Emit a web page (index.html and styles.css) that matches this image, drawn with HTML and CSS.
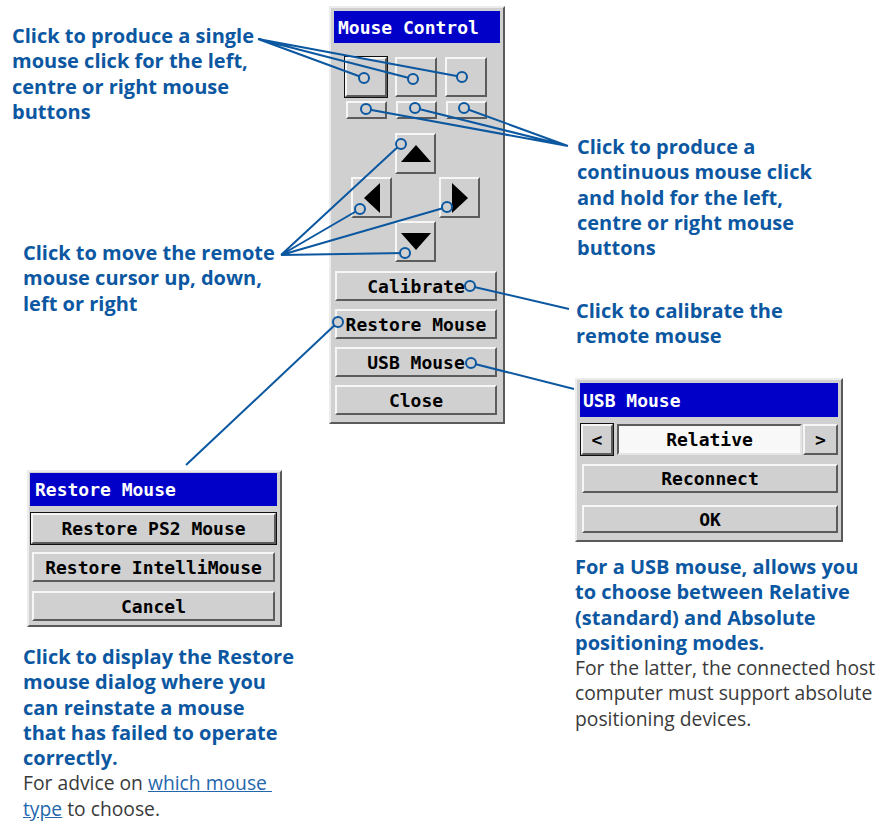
FILE: index.html
```html
<!DOCTYPE html>
<html lang="en">
<head>
    <meta charset="UTF-8">
    <meta name="viewport" content="width=device-width, initial-scale=1.0">
    <title>Mouse Control</title>
    <link rel="stylesheet" href="styles.css">
</head>
<body>
    <div class="figure">
        <!-- Mouse Control dialog -->
        <div class="dialog mouse-control">
            <div class="title">Mouse Control</div>
            <div class="click-row">
                <div class="btn focus"></div>
                <div class="btn"></div>
                <div class="btn"></div>
            </div>
            <div class="hold-row">
                <div class="btn"></div>
                <div class="btn"></div>
                <div class="btn"></div>
            </div>
            <div class="arrows">
                <div class="btn up"><svg width="30" height="17" viewBox="0 0 30 17"><polygon points="15,0 30,17 0,17"/></svg></div>
                <div class="btn left"><svg width="16" height="30" viewBox="0 0 16 30"><polygon points="0,15 16,0 16,30"/></svg></div>
                <div class="btn right"><svg width="16" height="30" viewBox="0 0 16 30"><polygon points="16,15 0,0 0,30"/></svg></div>
                <div class="btn down"><svg width="30" height="17" viewBox="0 0 30 17"><polygon points="15,17 30,0 0,0"/></svg></div>
            </div>
            <div class="actions">
                <div class="btn">Calibrate</div>
                <div class="btn">Restore Mouse</div>
                <div class="btn">USB Mouse</div>
                <div class="btn">Close</div>
            </div>
        </div>

        <!-- USB Mouse dialog -->
        <div class="dialog usb-mouse">
            <div class="title">USB Mouse</div>
            <div class="mode-row">
                <div class="btn step focus">&lt;</div>
                <div class="field">Relative</div>
                <div class="btn step next">&gt;</div>
            </div>
            <div class="btn wide reconnect">Reconnect</div>
            <div class="btn wide ok">OK</div>
        </div>

        <!-- Restore Mouse dialog -->
        <div class="dialog restore-mouse">
            <div class="title">Restore Mouse</div>
            <div class="btn ps2 focus">Restore PS2 Mouse</div>
            <div class="btn item">Restore IntelliMouse</div>
            <div class="btn item">Cancel</div>
        </div>

        <p class="note note-single">Click to produce a single<br>mouse click for the left,<br>centre or right mouse<br>buttons</p>
        <p class="note note-hold">Click to produce a<br>continuous mouse click<br>and hold for the left,<br>centre or right mouse<br>buttons</p>
        <p class="note note-move">Click to move the remote<br>mouse cursor up, down,<br>left or right</p>
        <p class="note note-calibrate">Click to calibrate the<br>remote mouse</p>
        <p class="note note-restore">Click to display the Restore<br>mouse dialog where you<br>can reinstate a mouse<br>that has failed to operate<br>correctly.<br><span class="plain">For advice on <a href="#">which mouse&nbsp;<br>type</a> to choose.</span></p>
        <p class="note note-usb">For a USB mouse, allows you<br>to choose between Relative<br>(standard) and Absolute<br>positioning modes.<br><span class="plain">For the latter, the connected host<br>computer must support absolute<br>positioning devices.</span></p>

        <!-- leader lines -->
        <svg class="leaders" width="879" height="822" viewBox="0 0 879 822">
            <g class="lines">
                <path d="M258 39 L364 78 M258 39 L413 79 M258 39 L462 77"/>
                <path d="M568 146 L366 109 M568 146 L415 108 M568 146 L464 108"/>
                <path d="M281 255 L401 144 M281 255 L360 209 M281 255 L447 207 M281 255 L405 253"/>
                <path d="M470 286 L569 309"/>
                <path d="M338 322 L186 465"/>
                <path d="M471 363 L574 389"/>
            </g>
            <g class="dots">
                <circle cx="364" cy="78" r="5"/>
                <circle cx="413" cy="79" r="5"/>
                <circle cx="462" cy="77" r="5"/>
                <circle cx="366" cy="109" r="5"/>
                <circle cx="415" cy="108" r="5"/>
                <circle cx="464" cy="108" r="5"/>
                <circle cx="401" cy="144" r="5"/>
                <circle cx="360" cy="209" r="5"/>
                <circle cx="447" cy="207" r="5"/>
                <circle cx="405" cy="253" r="5"/>
                <circle cx="470" cy="286" r="5"/>
                <circle cx="338" cy="322" r="5"/>
                <circle cx="471" cy="363" r="5"/>
            </g>
        </svg>
    </div>
</body>
</html>
```

FILE: styles.css
```css
body {
    margin: 0;
    background-color: white;
}
.figure {
    position: relative;
    width: 879px;
    height: 822px;
    overflow: hidden;
}

/* dialogs */
.dialog {
    position: absolute;
    box-sizing: border-box;
    display: flex;
    flex-direction: column;
    background-color: #d0d0d0;
    border: 2px solid;
    border-color: #ececec #5a5a5a #5a5a5a #ececec;
    padding: 3px;
    font-family: "DejaVu Sans Mono", monospace;
    font-weight: bold;
    font-size: 18px;
    color: #000;
}
.title {
    background-color: #0000c8;
    color: white;
    padding-left: 4px;
    display: flex;
    align-items: center;
}
.btn {
    box-sizing: border-box;
    display: flex;
    align-items: center;
    justify-content: center;
    background-color: #d0d0d0;
    border: 2px solid;
    border-color: #f6f6f6 #5c5c5c #5c5c5c #f6f6f6;
    white-space: pre;
}
.btn.focus {
    box-shadow: 0 0 0 1px #111;
}

.mouse-control {
    left: 329px;
    top: 6px;
    width: 176px;
    height: 418px;
}
.mouse-control .title {
    height: 32px;
}
.click-row, .hold-row {
    display: grid;
    grid-template-columns: repeat(3, 42px);
    column-gap: 8px;
}
.click-row {
    margin-top: 14px;
    padding-left: 11px;
}
.click-row .btn {
    height: 40px;
}
.hold-row {
    margin-top: 4px;
    padding-left: 12px;
    grid-template-columns: repeat(3, 41px);
    column-gap: 9px;
}
.hold-row .btn {
    height: 18px;
}
.arrows {
    display: grid;
    grid-template-columns: repeat(3, 41px);
    grid-template-rows: repeat(3, 41px);
    gap: 3px;
    margin-top: 14px;
    padding-left: 17px;
}
.arrows svg {
    fill: #000;
}
.arrows .up { grid-column: 2; grid-row: 1; }
.arrows .left { grid-column: 1; grid-row: 2; }
.arrows .right { grid-column: 3; grid-row: 2; }
.arrows .down { grid-column: 2; grid-row: 3; }
.actions {
    display: flex;
    flex-direction: column;
    gap: 8px;
    margin-top: 9px;
    padding-left: 1px;
}
.actions .btn {
    width: 162px;
    height: 30px;
}

.usb-mouse {
    left: 575px;
    top: 378px;
    width: 268px;
    height: 164px;
}
.usb-mouse .title {
    height: 34px;
    padding-left: 3px;
}
.mode-row {
    display: flex;
    margin-top: 7px;
    height: 31px;
    padding-left: 1px;
}
.step {
    width: 32px;
}
.step.next {
    width: 35px;
    margin-left: 1px;
}
.field {
    width: 185px;
    margin-left: 4px;
    box-sizing: border-box;
    display: flex;
    align-items: center;
    justify-content: center;
    background-color: #f8f8f8;
    border: 2px solid;
    border-color: #5c5c5c #e4e4e4 #e4e4e4 #5c5c5c;
}
.wide {
    margin-left: 2px;
    width: 256px;
}
.reconnect {
    margin-top: 9px;
    height: 29px;
}
.ok {
    margin-top: 12px;
    height: 28px;
}

.restore-mouse {
    left: 27px;
    top: 470px;
    width: 255px;
    height: 157px;
    padding: 1px;
}
.restore-mouse .title {
    height: 33px;
    padding-left: 5px;
    margin-right: 2px;
}
.ps2 {
    margin: 7px 0 0 1px;
    width: 245px;
    height: 31px;
}
.item {
    margin: 8px 0 0 2px;
    width: 243px;
    height: 30px;
}
.item + .item {
    margin-top: 9px;
}

/* callout notes */
.note {
    position: absolute;
    margin: 0;
    font-family: "Open Sans", sans-serif;
    font-weight: bold;
    font-size: 20px;
    line-height: 25.3px;
    color: #0c57a1;
    white-space: nowrap;
}
.note .plain {
    font-weight: normal;
    font-size: 19.3px;
    color: #3a3a3a;
}
.note a {
    color: #2467ad;
    text-decoration: underline;
}
.note-single { left: 12px; top: 23px; }
.note-hold { left: 577px; top: 134px; }
.note-move { left: 23px; top: 240px; }
.note-calibrate { left: 576px; top: 298px; }
.note-restore { left: 23px; top: 644px; }
.note-usb { left: 575px; top: 554px; }

/* leader lines */
.leaders {
    position: absolute;
    left: 0;
    top: 0;
    pointer-events: none;
}
.leaders .lines {
    stroke: #0b57a0;
    stroke-width: 2;
    fill: none;
}
.leaders .dots {
    stroke: #0b57a0;
    stroke-width: 2;
    fill: #d0d0d0;
}
```
